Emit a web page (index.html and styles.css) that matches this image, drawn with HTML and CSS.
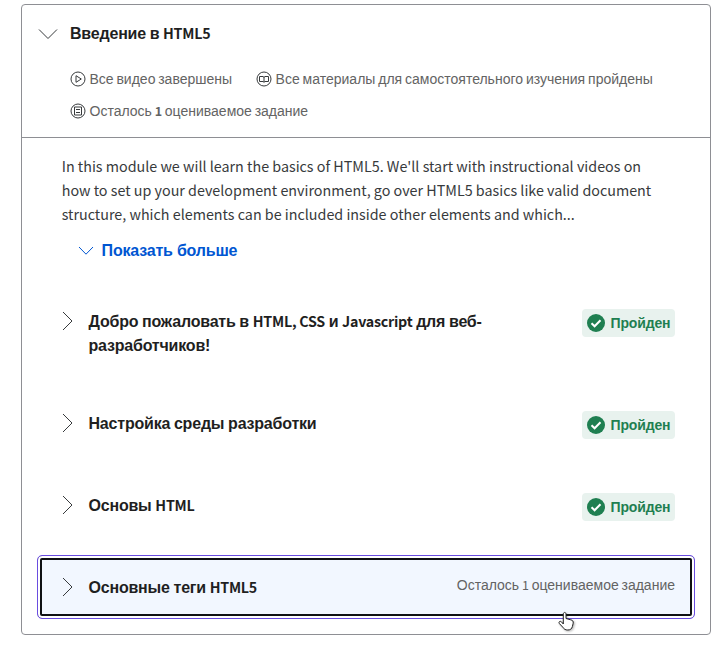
FILE: index.html
```html
<!DOCTYPE html>
<html lang="ru">
<head>
<meta charset="utf-8">
<title>Введение в HTML5</title>
<link rel="stylesheet" href="styles.css">
</head>
<body>
<main class="module">
  <header class="module-header">
    <svg class="chevron-down" viewBox="0 0 20 12"><path d="M1 1.5 10 10.5 19 1.5"/></svg>
    <div class="module-info">
      <h1 class="module-title">Введение в <span class="latin">HTML5</span></h1>
      <ul class="stats">
        <li class="stat"><svg class="stat-icon" viewBox="0 0 16 16"><circle cx="8" cy="8" r="7"/><path d="M6 4.7 11.3 8 6 11.3Z"/></svg><span>Все видео завершены</span></li>
        <li class="stat stat-reading"><svg class="stat-icon" viewBox="0 0 16 16"><circle cx="8" cy="8" r="7"/><path d="M3.5 5.5H7L8 6.3 9 5.5H12.5V10.5H9L8 11.3 7 10.5H3.5ZM8 6V11"/></svg><span>Все материалы для самостоятельного изучения пройдены</span></li>
        <li class="stat"><svg class="stat-icon" viewBox="0 0 16 16"><circle cx="8" cy="8" r="7"/><path d="M4.5 4H11.5V12H4.5ZM6 6.5H10M6 9.5H10"/></svg><span>Осталось <b class="latin">1</b> оцениваемое задание</span></li>
      </ul>
    </div>
  </header>
  <section class="module-body">
    <p class="description">In this module we will learn the basics of HTML5. We'll start with instructional videos on<br>how to set up your development environment, go over HTML5 basics like valid document<br>structure, which elements can be included inside other elements and which...</p>
    <button class="show-more"><svg class="more-icon" viewBox="0 0 16 10"><path d="M1 1 8 8.2 15 1"/></svg><span>Показать больше</span></button>
    <div class="lessons">
      <div class="lesson lesson-tall">
        <svg class="chevron-right" viewBox="0 0 12 20"><path d="M1 1 10 10 1 19"/></svg>
        <h2 class="lesson-title">Добро пожаловать в <span class="latin">HTML, CSS</span> и <span class="latin">Javascript</span> для веб-<br>разработчиков!</h2>
        <span class="badge"><svg class="check" viewBox="0 0 18 18"><circle cx="9" cy="9" r="9"/><path d="M4.5 9.2 7.6 12.3 13.5 6.2"/></svg><span>Пройден</span></span>
      </div>
      <div class="lesson">
        <svg class="chevron-right" viewBox="0 0 12 20"><path d="M1 1 10 10 1 19"/></svg>
        <h2 class="lesson-title">Настройка среды разработки</h2>
        <span class="badge"><svg class="check" viewBox="0 0 18 18"><circle cx="9" cy="9" r="9"/><path d="M4.5 9.2 7.6 12.3 13.5 6.2"/></svg><span>Пройден</span></span>
      </div>
      <div class="lesson">
        <svg class="chevron-right" viewBox="0 0 12 20"><path d="M1 1 10 10 1 19"/></svg>
        <h2 class="lesson-title">Основы <span class="latin">HTML</span></h2>
        <span class="badge"><svg class="check" viewBox="0 0 18 18"><circle cx="9" cy="9" r="9"/><path d="M4.5 9.2 7.6 12.3 13.5 6.2"/></svg><span>Пройден</span></span>
      </div>
      <div class="lesson lesson-active">
        <svg class="chevron-right" viewBox="0 0 12 20"><path d="M1 1 10 10 1 19"/></svg>
        <h2 class="lesson-title">Основные теги <span class="latin">HTML5</span></h2>
        <span class="remaining">Осталось <span class="latin">1</span> оцениваемое задание</span>
        <svg class="cursor" viewBox="0 0 18 22"><path d="M6.3 13V3.1C6.3 .9 9 .9 9 3.1V7.5L13.7 8.8C15.9 9.4 16.4 10.3 16.2 12.2L15.4 15.5C14.7 18 13.2 19 10.8 19 8.3 19 7.1 18.2 5.8 16.2L2.4 12.6C1.2 11 3 9.6 4.4 10.8Z"/></svg>
      </div>
    </div>
  </section>
</main>
</body>
</html>
```

FILE: styles.css
```css
* { box-sizing: border-box; }
body {
  margin: 0;
  padding: 4px 13px 0 21px;
  background: #fff;
  color: #1f1f1f;
  font-family: "Liberation Sans", sans-serif;
  font-size: 16px;
  line-height: 24px;
}
h1, h2, p, ul { margin: 0; padding: 0; }
svg { display: block; flex: none; fill: none; stroke: #373a3c; }
.latin {
  font-family: "Noto Sans CJK SC", sans-serif;
  font-size: 0.893em;
  line-height: 0;
  word-spacing: 0;
}
.module {
  height: 631px;
  border: 1px solid #8e8f94;
  border-radius: 4px;
}
.module-header {
  display: flex;
  height: 133px;
  padding: 17px 16px 0;
  border-bottom: 1px solid #8e8f94;
}
.chevron-down { width: 20px; height: 12px; margin-top: 6px; }
.module-info { margin-left: 12px; }
.module-title, .lesson-title {
  font-size: 16px;
  font-weight: 700;
  line-height: 24px;
  letter-spacing: -0.2px;
  word-spacing: -0.5px;
  white-space: nowrap;
}
.module-title .latin, .lesson-title .latin { letter-spacing: -0.25px; }
.stats {
  display: flex;
  flex-wrap: wrap;
  gap: 8px 24px;
  margin-top: 21px;
  list-style: none;
}
.stat {
  display: flex;
  align-items: center;
  gap: 3.5px;
  color: #636363;
  font-size: 14px;
  word-spacing: -1.1px;
  white-space: nowrap;
}
.stat-reading { word-spacing: -1px; }
.stat-icon { width: 16px; height: 16px; }
.module-body { padding: 16px 15px 0; }
.description {
  padding-left: 24.7px;
  font-family: "Noto Sans CJK SC", sans-serif;
  font-size: 14.32px;
  color: #373a3c;
  white-space: nowrap;
}
.show-more {
  display: flex;
  align-items: center;
  gap: 7.6px;
  height: 24px;
  margin: 13px 0 0 41px;
  padding: 0;
  border: 0;
  background: none;
  color: #0056d2;
  font: 700 16px/24px "Liberation Sans", sans-serif;
  letter-spacing: -0.2px;
}
.more-icon { width: 16px; height: 10px; stroke: #0056d2; }
.lessons { margin-top: 26px; }
.lesson {
  position: relative;
  display: flex;
  align-items: flex-start;
  height: 64px;
  margin: 0 0 18px;
  padding: 21px 20px 0 25px;
}
.lesson-tall { height: 84px; }
.chevron-right { width: 12px; height: 20px; margin-top: 1px; }
.lesson-title { margin-left: 14.5px; }
.badge {
  display: flex;
  align-items: center;
  gap: 5.5px;
  width: 93px;
  height: 28px;
  margin: -1px 0 0 auto;
  padding-left: 5px;
  border-radius: 4px;
  background: #e8f2ee;
  color: #1f7f51;
  font-size: 14px;
  font-weight: 700;
  letter-spacing: -0.15px;
}
.check { width: 18px; height: 18px; fill: #1f7f51; stroke: none; }
.check path { fill: none; stroke: #fff; stroke-width: 2; }
.lesson-active {
  margin: 0;
  padding: 20px 19px 0 24px;
  border: 1px solid #6a4de0;
  border-radius: 5px;
  box-shadow: inset 0 0 0 2px #fff, inset 0 0 0 4px #0f1114;
  background: #f2f7ff;
}
.remaining {
  margin: -3px 0 0 auto;
  color: #636363;
  font-size: 14px;
  word-spacing: -1.1px;
  white-space: nowrap;
}
.cursor {
  position: absolute;
  left: 519px;
  top: 55px;
  width: 18px;
  height: 22px;
  fill: #fff;
  stroke: #222;
  filter: drop-shadow(1px 1px 1px rgba(0, 0, 0, 0.3));
}
```
